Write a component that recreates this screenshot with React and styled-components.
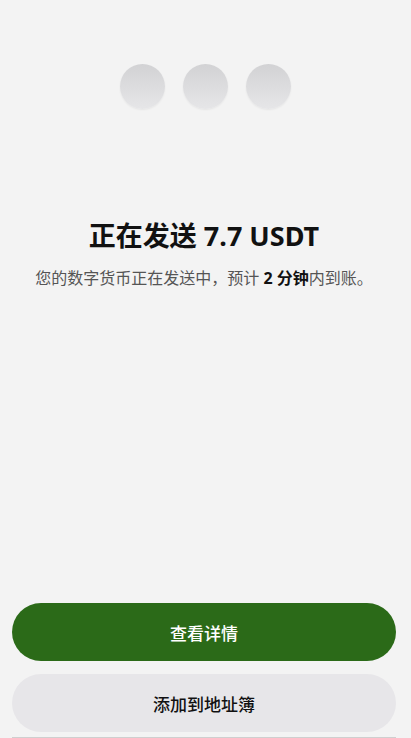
import React from 'react';
import styled, { createGlobalStyle } from 'styled-components';

const GlobalStyle = createGlobalStyle`
  html, body {
    margin: 0;
    padding: 0;
    background: #f3f3f3;
  }
  body {
    font-family: "Noto Sans", "Noto Sans CJK SC", sans-serif;
  }
`;

const Screen = styled.div`
  height: 738px;
  box-sizing: border-box;
  display: flex;
  flex-direction: column;
  background: #f3f3f3;
  padding: 64px 15px 0 12px;
`;

const Dots = styled.div`
  display: flex;
  justify-content: center;
  gap: 18px;
  padding-left: 3px;
`;

const Dot = styled.div`
  width: 45px;
  height: 45px;
  border-radius: 50%;
  background: linear-gradient(180deg, #d2d2d4 0%, #e6e6e8 100%);
  box-shadow: 0 1px 2px rgba(0, 0, 0, 0.06);
`;

const Title = styled.h1`
  margin: 109px 0 0;
  text-align: center;
  font-size: 27px;
  line-height: 36px;
  font-weight: 700;
  color: #111;
`;

const Subtitle = styled.p`
  margin: 12px 0 0;
  text-align: center;
  font-size: 16px;
  line-height: 24px;
  color: #555;

  b {
    color: #111;
    font-weight: 700;
  }
`;

const Spacer = styled.div`
  flex: 1;
`;

const Actions = styled.div`
  display: flex;
  flex-direction: column;
  gap: 13px;
  padding-bottom: 5px;
  border-bottom: 1px solid #cfcfcf;
`;

const Button = styled.button`
  height: 58px;
  border: none;
  border-radius: 29px;
  font-family: inherit;
  font-size: 17px;
  font-weight: 500;
  background: ${({ $primary }) => ($primary ? '#2b6a18' : '#e7e6e9')};
  color: ${({ $primary }) => ($primary ? '#fff' : '#111')};
`;

export default function App() {
  return (
    <>
      <GlobalStyle />
      <Screen>
        <Dots>
          <Dot />
          <Dot />
          <Dot />
        </Dots>
        <Title>正在发送 7.7 USDT</Title>
        <Subtitle>
          您的数字货币正在发送中，预计 <b>2 分钟</b>内到账。
        </Subtitle>
        <Spacer />
        <Actions>
          <Button $primary>查看详情</Button>
          <Button>添加到地址簿</Button>
        </Actions>
      </Screen>
    </>
  );
}
